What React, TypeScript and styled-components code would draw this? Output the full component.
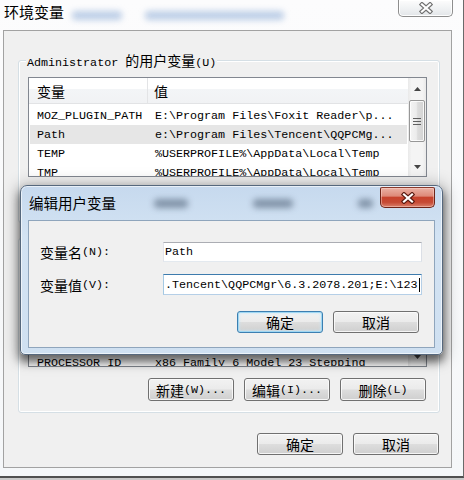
import React from "react";
import styled, { createGlobalStyle } from "styled-components";

const MONO = `"Liberation Mono", "Noto Sans CJK SC", monospace`;
const HAN = `"Noto Sans CJK SC", sans-serif`;

const Global = createGlobalStyle`
  html, body { margin: 0; padding: 0; background: #cfcfcf; }
  body { font-family: ${MONO}; color: #000; }
  * { box-sizing: border-box; }
`;

const Stage = styled.div`
  position: relative;
  width: 464px;
  height: 480px;
  overflow: hidden;
  background: #c9c9c9;
`;

const MainWin = styled.div`
  width: 464px;
  height: 478px;
  background: linear-gradient(180deg, #fcfcfd 0%, #f5f7f9 100%);
  border-right: 1px solid #6a6a6a;
  border-bottom: 2px solid #505050;
  display: flex;
  flex-direction: column;
`;

const TitleBar = styled.div`
  height: 30px;
  flex: none;
  display: flex;
  align-items: flex-start;
`;

const WinTitle = styled.div`
  margin: 3px 0 0 4px;
  font-family: ${HAN};
  font-size: 15px;
  line-height: 18px;
  color: #000;
`;

const Blur = styled.span<{ $w: number; $ml: number; $dark?: boolean }>`
  display: block;
  flex: none;
  width: ${(p) => p.$w}px;
  height: 9px;
  margin-left: ${(p) => p.$ml}px;
  align-self: center;
  border-radius: 4px;
  background: ${(p) => (p.$dark ? "rgba(70, 88, 110, 0.55)" : "rgba(110, 150, 205, 0.45)")};
  filter: blur(3px);
`;

const OuterClose = styled.div`
  margin-left: auto;
  margin-right: 10px;
  width: 55px;
  height: 17px;
  border: 1px solid #8e8e8e;
  border-top: none;
  border-radius: 0 0 5px 5px;
  background: linear-gradient(180deg, #fdfdfd 0%, #eef0f2 60%, #e2e5e8 100%);
  box-shadow: inset 0 0 0 1px rgba(255, 255, 255, 0.9);
  display: flex;
  align-items: center;
  justify-content: center;
`;

const Client = styled.div`
  margin: 0 11px 0 3px;
  border: 1px solid #a2a2a2;
  background: #f0f0f0;
  padding: 0 11px 12px 14px;
  display: flex;
  flex-direction: column;
`;

const Group = styled.div<{ $h: number; $mt: number }>`
  position: relative;
  height: ${(p) => p.$h}px;
  margin-top: ${(p) => p.$mt}px;
  border: 1px solid #d5dfe5;
  border-radius: 3px;
  box-shadow: inset 0 0 0 1px #ffffff;
  padding: 16px 12px 11px 9px;
  display: flex;
  flex-direction: column;
`;

const Legend = styled.div`
  position: absolute;
  top: -10px;
  left: 7px;
  padding: 0 1px;
  background: #f0f0f0;
  font-size: 11.7px;
  line-height: 18px;
  white-space: nowrap;
`;

const Han = styled.span<{ $size?: number }>`
  font-family: ${HAN};
  font-size: ${(p) => p.$size ?? 14}px;
`;

function Mixed({ text, size }: { text: string; size?: number }) {
  const parts = text.split(/([\u3000-\u9fff\uff00-\uffef]+)/);
  return (
    <>
      {parts.map((p, i) =>
        i % 2 ? (
          <Han key={i} $size={size}>
            {p}
          </Han>
        ) : (
          <React.Fragment key={i}>{p}</React.Fragment>
        )
      )}
    </>
  );
}

/* ---------- list view ---------- */

const ListBox = styled.div<{ $h: number }>`
  height: ${(p) => p.$h}px;
  flex: none;
  border: 1px solid #828790;
  background: #ffffff;
  display: flex;
  overflow: hidden;
`;

const ListMain = styled.div`
  flex: 1;
  min-width: 0;
  display: flex;
  flex-direction: column;
`;

const Header = styled.div`
  flex: none;
  height: 26px;
  display: grid;
  grid-template-columns: 119px 1fr;
  background: linear-gradient(180deg, #ffffff 0%, #ffffff 45%, #f3f5f7 45%, #f1f2f4 100%);
  border-bottom: 1px solid #e2e3e5;
`;

const HeadCell = styled.div<{ $first?: boolean }>`
  display: flex;
  align-items: center;
  padding-left: ${(p) => (p.$first ? 8 : 6)}px;
  border-right: ${(p) => (p.$first ? "1px solid #e3e4e6" : "none")};
  font-family: ${HAN};
  font-size: 14px;
  color: #000;
`;

const ListBody = styled.div`
  flex: 1;
  overflow: hidden;
`;

const Rows = styled.div<{ $offset: number }>`
  margin-top: ${(p) => p.$offset}px;
`;

const Row = styled.div<{ $sel?: boolean }>`
  height: 19px;
  margin: 0 1px;
  display: grid;
  grid-template-columns: 118px 1fr;
  align-items: center;
  background: ${(p) => (p.$sel ? "#e6e6e6" : "transparent")};
  font-family: ${MONO};
  font-size: 11.7px;
  color: #000;
  white-space: nowrap;
`;

const Cell = styled.span<{ $pad: number }>`
  padding-left: ${(p) => p.$pad}px;
  overflow: hidden;
`;

const Scroll = styled.div`
  width: 18px;
  flex: none;
  display: flex;
  flex-direction: column;
  background: linear-gradient(90deg, #e9e9e9 0%, #f4f4f4 20%, #f4f4f4 80%, #e9e9e9 100%);
`;

const ArrowBox = styled.div<{ $h: number }>`
  height: ${(p) => p.$h}px;
  flex: none;
  display: flex;
  align-items: center;
  justify-content: center;
`;

const Thumb = styled.div<{ $top: number; $h: number }>`
  flex: none;
  margin: ${(p) => p.$top}px 1px 0 1px;
  height: ${(p) => p.$h}px;
  border: 1px solid #979797;
  border-radius: 2px;
  background: linear-gradient(90deg, #f4f4f4 0%, #ececec 45%, #dcdcdc 55%, #d3d3d3 100%);
  box-shadow: inset 0 0 0 1px rgba(255, 255, 255, 0.8);
  display: flex;
  align-items: center;
  justify-content: center;
`;

const Track = styled.div`
  flex: 1;
`;

function Tri({ up }: { up?: boolean }) {
  return (
    <svg width="7" height="4" viewBox="0 0 7 4">
      <path d={up ? "M0 4 L3.5 0 L7 4 Z" : "M0 0 L3.5 4 L7 0 Z"} fill="#454545" />
    </svg>
  );
}

function Grip() {
  return (
    <svg width="8" height="7" viewBox="0 0 8 7">
      {[0, 3, 6].map((y) => (
        <rect key={y} x="0" y={y} width="8" height="1" fill="#5f5f5f" />
      ))}
    </svg>
  );
}

type RowData = [string, string];

function VarList({
  height,
  offset,
  rows,
  selected,
  thumbTop,
  thumbH,
}: {
  height: number;
  offset: number;
  rows: RowData[];
  selected?: number;
  thumbTop: number;
  thumbH: number;
}) {
  return (
    <ListBox $h={height}>
      <ListMain>
        <Header>
          <HeadCell $first>变量</HeadCell>
          <HeadCell>值</HeadCell>
        </Header>
        <ListBody>
          <Rows $offset={offset}>
            {rows.map(([n, v], i) => (
              <Row key={n + i} $sel={i === selected}>
                <Cell $pad={7}>{n}</Cell>
                <Cell $pad={7}>{v}</Cell>
              </Row>
            ))}
          </Rows>
        </ListBody>
      </ListMain>
      <Scroll>
        <ArrowBox $h={21}>
          <Tri up />
        </ArrowBox>
        <Thumb $top={thumbTop} $h={thumbH}>
          <Grip />
        </Thumb>
        <Track />
        <ArrowBox $h={19}>
          <Tri />
        </ArrowBox>
      </Scroll>
    </ListBox>
  );
}

/* ---------- buttons ---------- */

const BtnRow = styled.div<{ $mt: number; $pr: number }>`
  margin-top: ${(p) => p.$mt}px;
  padding-right: ${(p) => p.$pr}px;
  display: flex;
  justify-content: flex-end;
  gap: 10px;
`;

const Btn = styled.div<{ $h?: number; $default?: boolean }>`
  width: 86px;
  height: ${(p) => p.$h ?? 23}px;
  border: 1px solid ${(p) => (p.$default ? "#3c7fb1" : "#707070")};
  border-radius: 3px;
  background: linear-gradient(180deg, #f2f2f2 0%, #ebebeb 48%, #dddddd 52%, #cfcfcf 100%);
  box-shadow: ${(p) =>
    p.$default
      ? "inset 0 0 0 1px #9fd7f3, inset 0 0 3px 1px #c6e9fa"
      : "inset 0 0 0 1px rgba(252, 252, 252, 0.85)"};
  display: flex;
  align-items: center;
  justify-content: center;
  font-family: ${MONO};
  font-size: 11.7px;
  line-height: 16px;
  color: #000;
  white-space: nowrap;
`;

/* ---------- close icons ---------- */

function XIcon({ fill, stroke }: { fill: string; stroke: string }) {
  return (
    <svg width="14" height="12" viewBox="0 0 14 12">
      <path d="M3 2.5 L11 9.5 M11 2.5 L3 9.5" stroke={stroke} strokeWidth="4.4" strokeLinecap="square" />
      <path d="M3 2.5 L11 9.5 M11 2.5 L3 9.5" stroke={fill} strokeWidth="2.2" strokeLinecap="square" />
    </svg>
  );
}

/* ---------- edit dialog ---------- */

const Dialog = styled.div`
  position: absolute;
  left: 20px;
  top: 185px;
  width: 423px;
  height: 170px;
  border: 1px solid #56687d;
  border-radius: 7px 7px 5px 5px;
  background: linear-gradient(180deg, #c6d9ee 0%, #d3e3f3 30%, #cfe0f1 100%);
  box-shadow: 0 6px 9px 1px rgba(0, 0, 0, 0.5), 0 2px 16px 3px rgba(0, 0, 0, 0.25),
    inset 0 0 0 1px rgba(255, 255, 255, 0.6);
  padding: 0 7px 6px 7px;
  display: flex;
  flex-direction: column;
`;

const DlgTitleBar = styled.div`
  height: 34px;
  flex: none;
  display: flex;
  align-items: flex-start;
`;

const DlgTitle = styled.div`
  align-self: center;
  margin-left: 1px;
  font-family: ${HAN};
  font-size: 14.5px;
  line-height: 18px;
  color: #000;
`;

const RedClose = styled.div`
  margin-left: auto;
  margin-top: 1px;
  width: 55px;
  height: 21px;
  border: 1px solid #6e2418;
  border-top-color: #8a3a2c;
  border-radius: 2px 2px 5px 5px;
  background: linear-gradient(180deg, #eab1a4 0%, #de8a79 42%, #c7432d 50%, #c64a34 75%, #d9806b 100%);
  box-shadow: inset 0 0 0 1px rgba(255, 220, 210, 0.45);
  display: flex;
  align-items: center;
  justify-content: center;
`;

const DlgClient = styled.div`
  flex: 1;
  border: 1px solid #8fa5bc;
  background: #f0f0f0;
  padding: 21px 15px 14px 11px;
  display: flex;
  flex-direction: column;
`;

const Form = styled.div`
  display: grid;
  grid-template-columns: 123px 259px;
  row-gap: 12px;
`;

const FieldLabel = styled.div`
  display: flex;
  align-items: center;
  font-size: 11.7px;
  line-height: 16px;
  white-space: nowrap;
`;

const TextBox = styled.div<{ $h: number; $focus?: boolean }>`
  height: ${(p) => p.$h}px;
  border: 1px solid;
  border-color: ${(p) =>
    p.$focus ? "#3d7bad #b5cfe7 #b5cfe7 #a4c9e3" : "#abadb3 #dbdfe6 #e3e9ef #e2e3ea"};
  background: #ffffff;
  padding-left: 1px;
  display: flex;
  align-items: center;
  font-family: ${MONO};
  font-size: 11.7px;
  white-space: nowrap;
  overflow: hidden;
`;

const Caret = styled.span`
  display: inline-block;
  width: 1px;
  height: 14px;
  margin-left: 1px;
  background: #000;
`;

const userRows: RowData[] = [
  ["MOZ_PLUGIN_PATH", "E:\\Program Files\\Foxit Reader\\p..."],
  ["Path", "e:\\Program Files\\Tencent\\QQPCMg..."],
  ["TEMP", "%USERPROFILE%\\AppData\\Local\\Temp"],
  ["TMP", "%USERPROFILE%\\AppData\\Local\\Temp"],
];

const sysRows: RowData[] = [
  ["OS", "Windows_NT"],
  ["Path", "C:\\Windows\\system32;C:\\Windows;..."],
  ["PATHEXT", ".COM;.EXE;.BAT;.CMD;.VBS;.VBE;..."],
  ["PROCESSOR_AR...", "x86"],
  ["PROCESSOR_ID", "x86 Family 6 Model 23 Stepping"],
  ["PROCESSOR_LE...", "6"],
];

export default function App() {
  return (
    <>
      <Global />
      <Stage>
        <MainWin>
          <TitleBar>
            <WinTitle>环境变量</WinTitle>
            <Blur $w={50} $ml={8} />
            <Blur $w={139} $ml={23} />
            <OuterClose>
              <XIcon fill="#ffffff" stroke="#707070" />
            </OuterClose>
          </TitleBar>
          <Client>
            <Group $h={163} $mt={29}>
              <Legend>
                <Mixed text="Administrator 的用户变量(U)" />
              </Legend>
              <VarList height={100} offset={2} rows={userRows} selected={1} thumbTop={1} thumbH={42} />
              <BtnRow $mt={11} $pr={1}>
                <Btn>
                  <Mixed text="新建(N)..." />
                </Btn>
                <Btn>
                  <Mixed text="编辑(E)..." />
                </Btn>
                <Btn>
                  <Mixed text="删除(D)" />
                </Btn>
              </BtnRow>
            </Group>
            <Group $h={175} $mt={15}>
              <Legend>
                <Mixed text="系统变量(S)" />
              </Legend>
              <VarList height={112} offset={-5} rows={sysRows} thumbTop={20} thumbH={30} />
              <BtnRow $mt={11} $pr={1}>
                <Btn>
                  <Mixed text="新建(W)..." />
                </Btn>
                <Btn>
                  <Mixed text="编辑(I)..." />
                </Btn>
                <Btn>
                  <Mixed text="删除(L)" />
                </Btn>
              </BtnRow>
            </Group>
            <BtnRow $mt={20} $pr={1}>
              <Btn $h={22}>
                <Mixed text="确定" />
              </Btn>
              <Btn $h={22}>
                <Mixed text="取消" />
              </Btn>
            </BtnRow>
          </Client>
        </MainWin>

        <Dialog>
          <DlgTitleBar>
            <DlgTitle>编辑用户变量</DlgTitle>
            <Blur $w={34} $ml={38} $dark />
            <Blur $w={40} $ml={65} $dark />
            <Blur $w={15} $ml={65} $dark />
            <RedClose>
              <XIcon fill="#ffffff" stroke="#5a1a10" />
            </RedClose>
          </DlgTitleBar>
          <DlgClient>
            <Form>
              <FieldLabel>
                <Mixed text="变量名(N):" />
              </FieldLabel>
              <TextBox $h={20}>Path</TextBox>
              <FieldLabel>
                <Mixed text="变量值(V):" />
              </FieldLabel>
              <TextBox $h={21} $focus>
                .Tencent\QQPCMgr\6.3.2078.201;E:\123
                <Caret />
              </TextBox>
            </Form>
            <BtnRow $mt={16} $pr={0}>
              <Btn $h={22} $default>
                <Mixed text="确定" />
              </Btn>
              <Btn $h={22}>
                <Mixed text="取消" />
              </Btn>
            </BtnRow>
          </DlgClient>
        </Dialog>
      </Stage>
    </>
  );
}
